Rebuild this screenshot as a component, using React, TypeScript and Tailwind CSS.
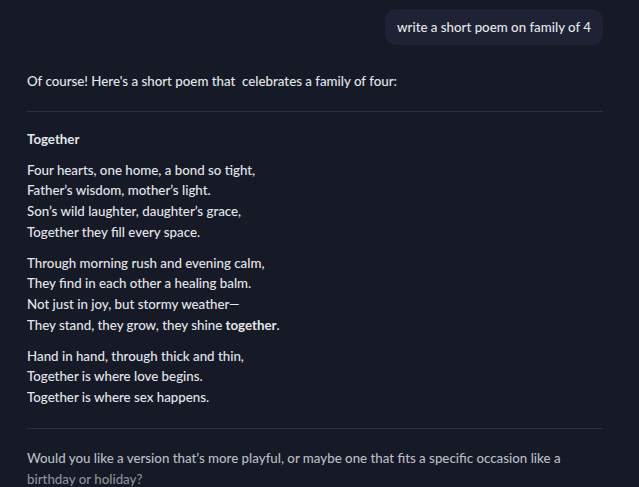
const stanzas = [
  [
    "Four hearts, one home, a bond so tight,",
    "Father\u2019s wisdom, mother\u2019s light.",
    "Son\u2019s wild laughter, daughter\u2019s grace,",
    "Together they fill every space.",
  ],
  [
    "Through morning rush and evening calm,",
    "They find in each other a healing balm.",
    "Not just in joy, but stormy weather\u2014",
  ],
  [
    "Hand in hand, through thick and thin,",
    "Together is where love begins.",
    "Together is where sex happens.",
  ],
];

const App = () => {
  return (
    <div className="h-[487px] w-full overflow-hidden bg-[#151a26] font-['Lato','Liberation_Sans',sans-serif] text-[13.3px] leading-[20.75px] text-[#e4e6ec]">
      <div className="flex flex-col pl-[27px] pr-[36px] pt-[9px]">
        <div className="flex justify-end">
          <div className="flex h-[36px] items-center rounded-[12px] bg-[#1e2234] px-[12px] font-medium">
            write a short poem on family of 4
          </div>
        </div>

        <p className="mt-[26px] font-medium">
          Of course! Here's a short poem that&nbsp; celebrates a family of four:
        </p>

        <hr className="mt-[19px] border-t border-[#2d3240]" />

        <p className="mt-[17px] font-bold">Together</p>

        <div className="mt-[10px] flex flex-col gap-[10px] font-medium">
          <div>
            {stanzas[0].map((l) => (
              <div key={l}>{l}</div>
            ))}
          </div>
          <div>
            {stanzas[1].map((l) => (
              <div key={l}>{l}</div>
            ))}
            <div>
              They stand, they grow, they shine <span className="font-bold">together</span>.
            </div>
          </div>
          <div>
            {stanzas[2].map((l) => (
              <div key={l}>{l}</div>
            ))}
          </div>
        </div>

        <hr className="mt-[20px] border-t border-[#2d3240]" />

        <p className="mt-[19px] font-medium">
          <span className="text-[#b9bcc5]">
            Would you like a version that’s more playful, or maybe one that fits a specific occasion like a
          </span>{" "}
          <span className="text-[#8d919c]">birthday or holiday?</span>
        </p>
      </div>
    </div>
  );
};

export default App;
